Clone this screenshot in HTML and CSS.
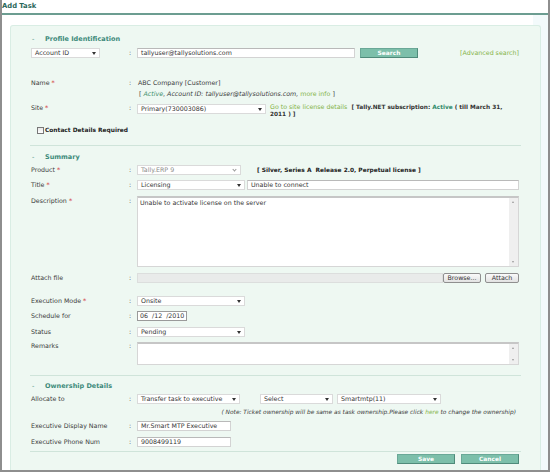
FILE: index.html
```html
<!DOCTYPE html>
<html>
<head>
<meta charset="utf-8">
<title>Add Task</title>
<link rel="stylesheet" href="styles.css">
</head>
<body>
<div class="window">
  <div class="titlebar">Add Task</div>
  <div class="content">
    <div class="panel">
      <h2 class="sec-h"><span class="dash">-</span>Profile Identification</h2>
      <div class="row r-acct">
        <div class="label"><div class="sel w-acct">Account ID<i class="arr"></i></div></div>
        <div class="colon">:</div>
        <div class="inp w-email">tallyuser@tallysolutions.com</div>
        <div class="btn-teal w-search">Search</div>
        <a class="link adv">[Advanced search]</a>
      </div>
      <div class="row r-name">
        <div class="label">Name <span class="req">*</span></div>
        <div class="colon">:</div>
        <div class="val">ABC Company [Customer]</div>
      </div>
      <div class="row r-info">
        <div class="label"></div>
        <div class="colon"></div>
        <div class="val">[ <em class="green">Active</em>, <em>Account ID: tallyuser@tallysolutions.com,</em> <span class="link">more info</span> ]</div>
      </div>
      <div class="row r-site">
        <div class="label">Site <span class="req">*</span></div>
        <div class="colon">:</div>
        <div class="sel w-site">Primary(730003086)<i class="arr"></i></div>
        <div class="site-note"><span class="link">Go to site license details</span>&nbsp; <b>[ Tally.NET subscription: <span class="teal">Active</span> ( till March 31,<br>2011 ) ]</b></div>
      </div>
      <div class="row r-check">
        <span class="checkbox"></span><b>Contact Details Required</b>
      </div>
      <div class="sep s1"></div>

      <h2 class="sec-h h-sum"><span class="dash">-</span>Summary</h2>
      <div class="row r-product">
        <div class="label">Product <span class="req">*</span></div>
        <div class="colon">:</div>
        <div class="sel disabled w-prod">Tally.ERP 9<i class="arr-v"></i></div>
        <b class="lic">[ Silver, Series A&nbsp; Release 2.0, Perpetual license ]</b>
      </div>
      <div class="row r-title">
        <div class="label">Title <span class="req">*</span></div>
        <div class="colon">:</div>
        <div class="sel w-title">Licensing<i class="arr"></i></div>
        <div class="inp w-subj">Unable to connect</div>
      </div>
      <div class="row r-desc">
        <div class="label">Description <span class="req">*</span></div>
        <div class="colon">:</div>
        <div class="area h-desc">
          <div class="area-text">Unable to activate license on the server</div>
          <div class="scroll"><i class="sa up"></i><i class="sa down"></i></div>
        </div>
      </div>
      <div class="row r-attach">
        <div class="label">Attach file</div>
        <div class="colon">:</div>
        <div class="file"></div>
        <div class="btn-gray w-browse">Browse...</div>
        <div class="btn-gray w-attach">Attach</div>
      </div>
      <div class="row r-exec">
        <div class="label">Execution Mode <span class="req">*</span></div>
        <div class="colon">:</div>
        <div class="sel w-title">Onsite<i class="arr"></i></div>
      </div>
      <div class="row r-sched">
        <div class="label">Schedule for</div>
        <div class="colon">:</div>
        <div class="date">06 &nbsp;/12 &nbsp;/2010</div>
      </div>
      <div class="row r-status">
        <div class="label">Status</div>
        <div class="colon">:</div>
        <div class="sel w-title">Pending<i class="arr"></i></div>
      </div>
      <div class="row r-remarks">
        <div class="label">Remarks</div>
        <div class="colon">:</div>
        <div class="area h-rem">
          <div class="area-text"></div>
          <div class="scroll"><i class="sa up"></i><i class="sa down"></i></div>
        </div>
      </div>
      <div class="sep s2"></div>

      <h2 class="sec-h h-own"><span class="dash">-</span>Ownership Details</h2>
      <div class="row r-alloc">
        <div class="label">Allocate to</div>
        <div class="colon">:</div>
        <div class="sel w-transfer">Transfer task to executive<i class="arr"></i></div>
        <div class="sel w-select">Select<i class="arr"></i></div>
        <div class="sel w-smart">Smartmtp(11)<i class="arr"></i></div>
      </div>
      <div class="note"><em>( Note: Ticket ownership will be same as task ownership.Please click <span class="link">here</span> to change the ownership)</em></div>
      <div class="row r-dname">
        <div class="label">Executive Display Name</div>
        <div class="colon">:</div>
        <div class="inp w-exec">Mr.Smart MTP Executive</div>
      </div>
      <div class="row r-phone">
        <div class="label">Executive Phone Num</div>
        <div class="colon">:</div>
        <div class="inp w-exec">9008499119</div>
      </div>
      <div class="sep s3"></div>
      <div class="actions">
        <div class="btn-teal w-save">Save</div>
        <div class="btn-teal w-cancel">Cancel</div>
      </div>
    </div>
  </div>
</div>
</body>
</html>
```
FILE: styles.css
```css
* { box-sizing: border-box; }
html, body { margin: 0; padding: 0; background: #fff; }
body {
  font-family: "DejaVu Sans", Verdana, sans-serif;
  font-size: 6.3px;
  color: #3a3a3a;
}
.window {
  width: 550px;
  height: 472px;
  border: 2px solid #8e8e8e;
  border-top: none;
  display: flex;
  flex-direction: column;
  background: #fff;
}
.titlebar {
  height: 15px;
  line-height: 13px;
  border-bottom: 2px solid #6c9d91;
  font-weight: bold;
  font-size: 6.8px;
  color: #2a6659;
  padding-left: 0;
}
.content {
  flex: 1;
  display: flex;
  padding: 10px 7px 0 8px;
  background: linear-gradient(to right, #fff 0, #fff 531px, #f3fafb 531px);
}
.panel {
  flex: 1;
  background: #eef8f2;
  border: 1px solid #d9ede4;
  border-bottom: none;
  border-radius: 3px 3px 0 0;
  padding: 8px 19px 0 20px;
}
.sec-h {
  margin: 0;
  height: 10px;
  line-height: 10px;
  font-size: 6.5px;
  font-weight: bold;
  color: #3d8a7a;
  padding-left: 1px;
  display: flex;
}
.dash { width: 13px; font-weight: normal; }
.row {
  display: flex;
  align-items: center;
  min-height: 10px;
  line-height: 8px;
}
.label { width: 98px; flex: none; padding-left: 0; }
.colon { width: 8px; flex: none; }
.val { padding-left: 1px; }
.req { color: #d23a3a; }
.link { color: #84b347; text-decoration: none; }
.green { color: #3b8f6c; }
.teal { color: #2f8a6a; }
em { font-style: italic; }

.inp, .sel, .date {
  height: 10px;
  line-height: 8px;
  background: #fff;
  border: 1px solid #d3d3d3;
  border-top-color: #b9b9b9;
  padding-left: 3px;
  white-space: nowrap;
  overflow: hidden;
  position: relative;
  flex: none;
  color: #333;
}
.sel { border-color: #dadada; }
.arr {
  position: absolute;
  right: 3px;
  top: 3px;
  width: 0; height: 0;
  border-left: 2.5px solid transparent;
  border-right: 2.5px solid transparent;
  border-top: 3px solid #333;
}
.arr-v {
  position: absolute;
  right: 4px;
  top: 2px;
  width: 3px; height: 3px;
  border-right: 1px solid #999;
  border-bottom: 1px solid #999;
  transform: rotate(45deg);
}
.disabled { color: #8a8a8a; }

.btn-teal {
  height: 10px;
  line-height: 8px;
  background: #7cbfaa;
  border: 1px solid #6aa897;
  border-bottom-color: #4f8a7a;
  border-right-color: #4f8a7a;
  color: #fff;
  font-weight: bold;
  font-size: 5.9px;
  text-align: center;
  flex: none;
}
.btn-gray {
  height: 10px;
  line-height: 8px;
  background: linear-gradient(#fafafa, #e2e2e2);
  border: 1px solid #8f8f8f;
  border-radius: 2px;
  color: #333;
  text-align: center;
  flex: none;
}

/* profile section */
.r-acct { margin-top: 4px; }
.w-acct { width: 69px; }
.w-email { width: 218px; }
.w-search { width: 58px; margin-left: 5px; }
.adv { margin-left: auto; margin-right: 2px; }
.r-name { margin-top: 20px; }
.r-info { margin-top: 1px; }
.r-info .val { padding-left: 2px; }
.r-site { margin-top: 5px; align-items: flex-start; }
.w-site { width: 129px; }
.site-note { margin-left: 4px; line-height: 6.5px; white-space: nowrap; }
.site-note b { font-size: 5.8px; color: #333; }
.r-check { margin-top: 8px; padding-left: 6px; }
.checkbox {
  width: 7px; height: 7px;
  border: 1px solid #777;
  background: linear-gradient(#e8e8e8, #fff);
  margin-right: 1px;
}
.r-check b { font-size: 5.9px; color: #222; }
.sep { height: 1px; background: #cfe4da; margin-left: -1px; }
.s1 { margin-top: 10px; }

/* summary */
.h-sum { margin-top: 6px; }
.r-product { margin-top: 3px; }
.w-prod { width: 104px; }
.lic { margin-left: 16px; font-size: 5.9px; color: #222; }
.r-title { margin-top: 5px; }
.w-title { width: 108px; }
.w-subj { margin-left: 2px; width: 272px; }
.r-desc { margin-top: 6px; align-items: flex-start; }
.r-desc .label, .r-desc .colon { line-height: 8px; padding-top: 1px; }
.area {
  width: 382px;
  background: #fff;
  border: 1px solid #d6d6d6;
  border-top: 2px solid #c6c6c6;
  display: flex;
  flex: none;
}
.h-desc { height: 71px; }
.h-rem { height: 23px; }
.area-text { flex: 1; padding: 1px 2px; line-height: 8px; color: #333; }
.scroll {
  width: 9px;
  background: #efefef;
  position: relative;
}
.sa {
  position: absolute;
  left: 3px;
  width: 0; height: 0;
  border-left: 1.5px solid transparent;
  border-right: 1.5px solid transparent;
}
.sa.up { top: 3px; border-bottom: 2px solid #999; }
.sa.down { bottom: 3px; border-top: 2px solid #999; }
.r-attach { margin-top: 6px; }
.file {
  width: 306px;
  height: 10px;
  background: #e9ebea;
  border: 1px solid #dcdedd;
  flex: none;
}
.w-browse { width: 38px; }
.w-attach { width: 34px; margin-left: 4px; }
.r-exec { margin-top: 13px; }
.r-sched { margin-top: 5px; }
.date { width: 50px; border: 1px solid #9a9a9a; padding-left: 2px; }
.r-status { margin-top: 6px; }
.r-remarks { margin-top: 5px; align-items: flex-start; }
.s2 { margin-top: 10px; }

/* ownership */
.h-own { margin-top: 5px; }
.r-alloc { margin-top: 3px; }
.w-transfer { width: 103px; }
.w-select { width: 73px; margin-left: 20px; }
.w-smart { width: 104px; margin-left: 4px; }
.note {
  margin-top: 3px;
  height: 10px;
  line-height: 10px;
  text-align: right;
  padding-right: 5px;
  font-size: 5.9px;
}
.r-dname { margin-top: 4px; }
.w-exec { width: 94px; }
.r-phone { margin-top: 6px; }
.s3 { margin-top: 4px; }
.actions {
  margin-top: 2px;
  display: flex;
  justify-content: flex-end;
  padding-right: 2px;
}
.w-save { width: 58px; }
.w-cancel { width: 58px; margin-left: 6px; }
```
